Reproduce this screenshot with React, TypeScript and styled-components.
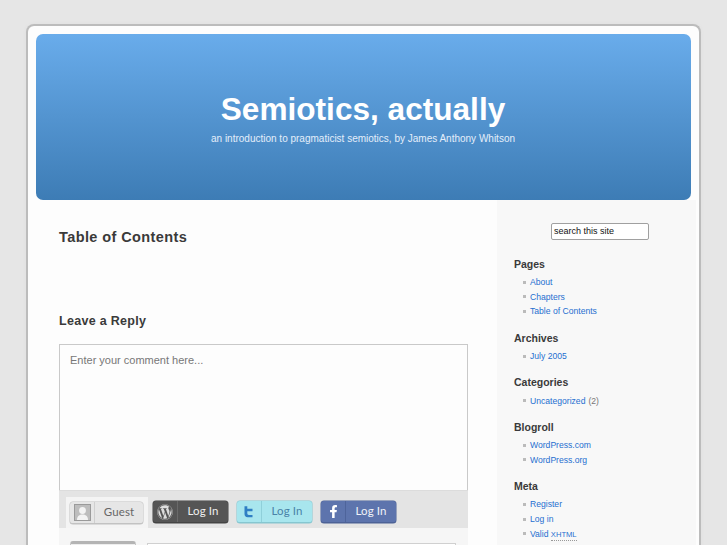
import React from "react";
import styled, { createGlobalStyle } from "styled-components";
import { FaWordpress, FaFacebookF } from "react-icons/fa";

const Global = createGlobalStyle`
  html, body { margin: 0; padding: 0; height: 545px; overflow: hidden; background: #e6e6e6; }
  body { font-family: "Liberation Sans", Arial, sans-serif; }
`;

const Page = styled.div`
  width: 675px;
  margin: 24px 0 0 26px;
`;
const Wrapper = styled.div`
  border: 2px solid #bcbcbc;
  border-bottom: 0;
  border-radius: 8px 8px 0 0;
  background: #fdfdfd;
  padding: 8px 8px 0;
  box-sizing: border-box;
  height: 560px;
  box-shadow: 0 0 3px #dcdcdc;
`;
const Header = styled.header`
  height: 166px;
  border-radius: 7px;
  background: linear-gradient(#69aceb, #3d7cb5);
  color: #fff;
  text-align: center;
  padding-top: 55px;
  box-sizing: border-box;
`;
const Title = styled.h1`
  margin: 0 1px 0 0;
  font-size: 31.6px;
  line-height: 40px;
  font-weight: 700;
`;
const Tagline = styled.p`
  margin: 3px 1px 0 0;
  font-size: 10px;
  line-height: 13px;
  color: #e4eefa;
`;
const Columns = styled.div`
  display: flex;
  margin: 0 -6px 0 0;
`;
const Content = styled.main`
  flex: 0 0 461px;
  box-sizing: border-box;
  padding: 28px 0 0 23px;
`;
const PostTitle = styled.h2`
  margin: 0;
  font-size: 14.5px;
  line-height: 18px;
  letter-spacing: 0.4px;
  color: #3a3a3a;
`;
const ReplyTitle = styled.h3`
  margin: 67px 0 0;
  font-size: 12.5px;
  line-height: 16px;
  letter-spacing: 0.3px;
  color: #3a3a3a;
`;
const Form = styled.div`
  width: 409px;
  margin-top: 15px;
`;
const TextBox = styled.div`
  height: 146px;
  box-sizing: border-box;
  border: 1px solid #c9c9c9;
  border-bottom: 0;
  padding: 8px 10px;
  font-size: 11px;
  line-height: 15px;
  color: #777;
  background: #fdfdfd;
`;
const Tabs = styled.div`
  height: 38px;
  background: #e4e4e4;
  display: flex;
  align-items: flex-end;
  padding-left: 7px;
  border-top: 1px solid #dcdcdc;
  box-sizing: border-box;
`;
const ActiveTab = styled.div`
  height: 31px;
  padding: 5px 5px 0 4px;
  margin-right: 5px;
  box-sizing: border-box;
  background: #f4f4f4;
`;
const LoginButton = styled.div<{ $wide?: boolean; $bg: string; $fg: string; $edge: string }>`
  display: flex;
  width: ${(p) => (p.$wide ? "75px" : "73px")};
  height: 21px;
  border-radius: 3px;
  background: ${(p) => p.$bg};
  color: ${(p) => p.$fg};
  border-bottom: 1px solid ${(p) => p.$edge};
  box-shadow: 0 0 0 0.5px ${(p) => p.$edge};
  font-family: Lato, "Liberation Sans", sans-serif;
  font-size: 11.5px;
  line-height: 19px;
  letter-spacing: 0.1px;
`;
const IconCell = styled.span<{ $line: string }>`
  flex: 0 0 25px;
  display: flex;
  align-items: center;
  justify-content: center;
  border-right: 1px solid ${(p) => p.$line};
  box-sizing: border-box;
`;
const LabelCell = styled.span`
  flex: 1;
  text-align: center;
`;
const ButtonSlot = styled.div`
  padding-bottom: 5px;
  margin-right: 9px;
`;
const FieldArea = styled.div`
  height: 40px;
  background: #f6f6f6;
  display: flex;
  gap: 11px;
  padding: 13px 0 0 11px;
  box-sizing: border-box;
`;
const AvatarBox = styled.div`
  width: 66px;
  height: 30px;
  border: 1px solid #c4c4c4;
  border-top: 3px solid #b4b4b4;
  border-radius: 3px 3px 0 0;
  background: #eee;
  box-sizing: border-box;
`;
const FieldBox = styled.div`
  width: 309px;
  height: 30px;
  margin-top: 2px;
  border: 1px solid #d0d0d0;
  background: #fff;
  box-sizing: border-box;
`;
const Sidebar = styled.aside`
  flex: 0 0 199px;
  background: #f8f8f8;
  box-sizing: border-box;
  padding: 23px 0 0 17px;
  height: 345px;
`;
const Search = styled.div`
  width: 98px;
  height: 17px;
  margin: 0 0 17px 37px;
  box-sizing: border-box;
  border: 1px solid #a0a0a0;
  border-radius: 2px;
  background: #fff;
  padding-left: 2px;
  font-size: 9px;
  line-height: 14px;
  color: #111;
`;
const WidgetTitle = styled.h4`
  margin: 0 0 4px;
  font-size: 10.5px;
  line-height: 14px;
  color: #3a3a3a;
`;
const List = styled.ul`
  list-style: none;
  margin: 0 0 12px;
  padding: 0;
`;
const Item = styled.li`
  display: flex;
  align-items: center;
  height: 14.6px;
  padding-left: 9px;
  font-size: 8.6px;
  color: #999;
  &::before {
    content: "";
    width: 3px;
    height: 3px;
    background: #bbb;
    margin-right: 4px;
  }
`;
const Link = styled.a`
  color: #1f6fd0;
  text-decoration: none;
`;
const Count = styled.span`
  margin-left: 3px;
  color: #777;
  font-size: 8.6px;
`;
const Abbr = styled.abbr`
  font-size: 7.6px;
  text-decoration: none;
  border-bottom: 1px dotted #999;
  padding-bottom: 1px;
`;

const widgets: { title: string; items: React.ReactNode[] }[] = [
  { title: "Pages", items: ["About", "Chapters", "Table of Contents"] },
  { title: "Archives", items: ["July 2005"] },
  { title: "Categories", items: ["Uncategorized"] },
  { title: "Blogroll", items: ["WordPress.com", "WordPress.org"] },
  { title: "Meta", items: ["Register", "Log in", <>Valid <Abbr>XHTML</Abbr></>] },
];

const GuestIcon = () => (
  <svg width="17" height="17" viewBox="0 0 17 17">
    <rect x="0.5" y="0.5" width="16" height="16" fill="#bdbdbd" stroke="#9a9a9a" />
    <circle cx="8.5" cy="6.5" r="3.4" fill="#f3f3f3" />
    <path d="M3 16c0-4 2.5-5.5 5.5-5.5S14 12 14 16z" fill="#f3f3f3" />
  </svg>
);
const TwitterIcon = () => (
  <svg width="12" height="13" viewBox="0 0 12 13">
    <path
      d="M1.5 1.2h2.8v2.6h5.2v2.5H4.3v2c0 1 .5 1.6 1.6 1.6h3.6v2.4H4.6c-2 0-3.1-1.2-3.1-3.2z"
      fill="#2f7fc4"
    />
  </svg>
);

export default function App() {
  return (
    <>
      <Global />
      <Page>
        <Wrapper>
          <Header>
            <Title>Semiotics, actually</Title>
            <Tagline>an introduction to pragmaticist semiotics, by James Anthony Whitson</Tagline>
          </Header>
          <Columns>
            <Content>
              <PostTitle>Table of Contents</PostTitle>
              <ReplyTitle>Leave a Reply</ReplyTitle>
              <Form>
                <TextBox>Enter your comment here...</TextBox>
                <Tabs>
                  <ActiveTab>
                    <LoginButton $bg="#e6e6e6" $fg="#666" $edge="#c2c2c2">
                      <IconCell $line="#cfcfcf"><GuestIcon /></IconCell>
                      <LabelCell>Guest</LabelCell>
                    </LoginButton>
                  </ActiveTab>
                  <ButtonSlot>
                    <LoginButton $wide $bg="#555555" $fg="#eee" $edge="#444">
                      <IconCell $line="#6a6a6a"><FaWordpress size={16} color="#ddd" /></IconCell>
                      <LabelCell>Log In</LabelCell>
                    </LoginButton>
                  </ButtonSlot>
                  <ButtonSlot>
                    <LoginButton $wide $bg="#a8e6ee" $fg="#4a83a8" $edge="#86c6d0">
                      <IconCell $line="#8fd0da"><TwitterIcon /></IconCell>
                      <LabelCell>Log In</LabelCell>
                    </LoginButton>
                  </ButtonSlot>
                  <ButtonSlot>
                    <LoginButton $wide $bg="#5d74ad" $fg="#f0f2f8" $edge="#4d6296">
                      <IconCell $line="#4e649b"><FaFacebookF size={13} color="#fff" /></IconCell>
                      <LabelCell>Log In</LabelCell>
                    </LoginButton>
                  </ButtonSlot>
                </Tabs>
                <FieldArea>
                  <AvatarBox />
                  <FieldBox />
                </FieldArea>
              </Form>
            </Content>
            <Sidebar>
              <Search>search this site</Search>
              {widgets.map((w) => (
                <React.Fragment key={w.title}>
                  <WidgetTitle>{w.title}</WidgetTitle>
                  <List>
                    {w.items.map((it, i) => (
                      <Item key={i}>
                        <Link href="#">{it}</Link>
                        {w.title === "Categories" && <Count>(2)</Count>}
                      </Item>
                    ))}
                  </List>
                </React.Fragment>
              ))}
            </Sidebar>
          </Columns>
        </Wrapper>
      </Page>
    </>
  );
}
